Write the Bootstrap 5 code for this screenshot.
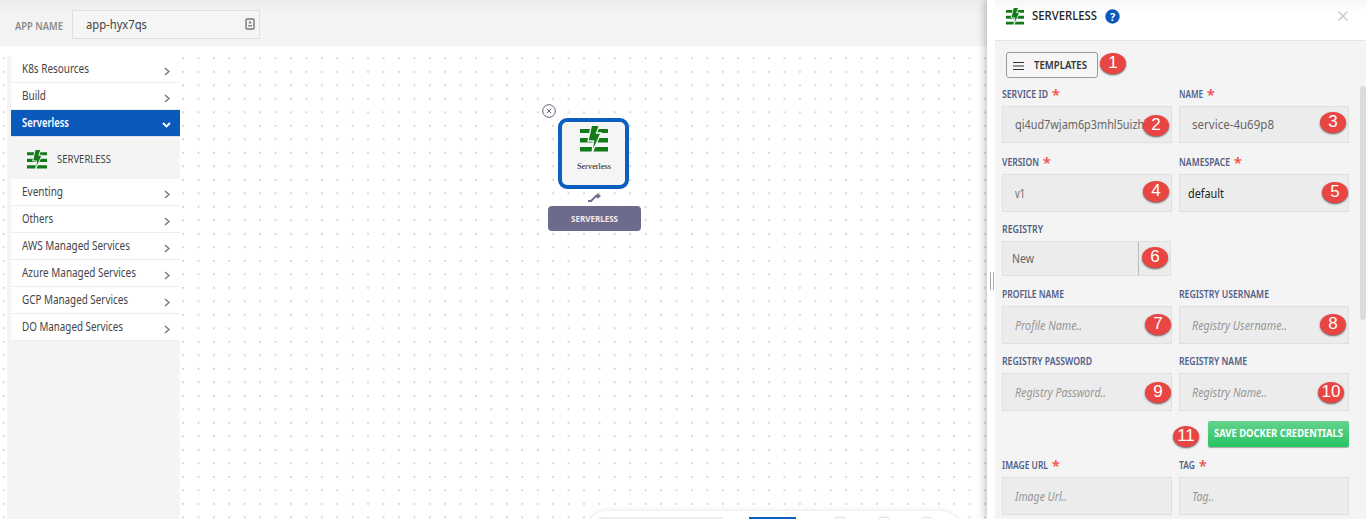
<!DOCTYPE html>
<html lang="en">
<head>
<meta charset="utf-8">
<meta name="viewport" content="width=device-width, initial-scale=1">
<title>Serverless</title>
<link href="https://cdn.jsdelivr.net/npm/bootstrap@5.3.0/dist/css/bootstrap.min.css" rel="stylesheet">
<style>
body{font-family:"Noto Sans","Open Sans",sans-serif;font-size:12px;line-height:1.2;color:#444;height:519px;overflow:hidden;background:#fff}
.fit{display:inline-block;transform-origin:0 50%;white-space:nowrap}
.app-shell{height:519px}
.workspace{width:987px;flex:none}
.topbar{height:46px;background:linear-gradient(#ececec,#f3f3f3 14px,#f4f4f4);padding-left:15px}
.topbar-label{width:57px;font-size:10.5px;font-weight:600;color:#8c8c8c;padding-top:6px}
.app-input{width:188px;height:29px;margin-top:2px;border:1px solid #e0e0e0;background:#f5f5f5;border-radius:0;padding:0 4px 0 13px;color:#444;font-size:12.5px}
.dots{background-image:radial-gradient(circle,#d2d2d2 .6px,rgba(215,215,215,.5) 1px,transparent 1.4px);background-size:15.43px 13.5px;background-position:-4.7px 5.6px}
.side-wrap{width:180px;flex:none;padding:10px 0 0 7px;background-position:-4.2px 5.6px}
.side-panel{background:#f4f4f4;padding-left:4px;height:100%}
.side-panel .list-group-item{height:27px;padding:0 10px 0 11px;border:0;border-bottom:1px solid #eee;border-radius:0;color:#444;background:#fff}
.side-panel .list-group-item.active{background:#0b5abb;color:#fff;font-weight:600;margin:0;border-color:#dde;padding-right:9px}
.side-panel .chev{margin-top:4px}
.sub-item{height:42px;padding:2px 0 0 16px;gap:10px;font-size:11px}
.node{width:71px;height:71px;border:4px solid #0d5fbf;border-radius:9px;background:#f5f5f5;left:378px;top:72px}
.node-text{font:8px "Liberation Serif",serif;color:#111}
.node-close{left:362px;top:58px}
.node-link{left:407px;top:147px}
.node-tag{left:368px;top:160px;width:93px;height:25px;background:#6c6b8c;color:#f3eaf0;border-radius:4px;font-size:9.5px;font-weight:700}
.toolbar-peek{left:407px;bottom:-32px;width:374px;height:40px;border-radius:20px;background:#fff;box-shadow:0 0 4px 1px #e9e9e9}
.drawer{width:379px;background:#fff;box-shadow:-1px 0 9px rgba(0,0,0,.3);z-index:3;padding-left:8px}
.drawer-head{height:41px;border-bottom:1px solid #e4e4e4;padding:0 18px 8px 11px;background:linear-gradient(#f6f6f6,#fff 12px)}
.drawer-title{font-size:12px;font-weight:500;color:#222;margin-left:8px;padding-top:1px}
.drawer-body{background:#f4f4f4;padding:11px 17px 0 7px;height:478px}
.tpl-btn{width:92px;height:26px;margin-left:4px;border:1px solid #999;border-radius:3px;padding:1px 0 0 6px;font-size:10.5px;font-weight:600;color:#333;gap:10px;background:#f6f6f6}
.form-line{display:grid;grid-template-columns:170px 170px;column-gap:7px}
.form-line label{display:block;height:20px;padding-top:2px;font-size:10.5px;font-weight:600;color:#525f87;line-height:13px;white-space:nowrap}
.req{color:#f0504e;font-size:15px;line-height:0;position:relative;top:2px;margin-left:1px}
.field{height:38px;border:1px solid #e0e0e0;border-radius:0;background:#ececec;padding:0 12px;font-size:12.5px;color:#666;white-space:nowrap}
.field.ph>.fit{color:#969696;font-style:italic}
.field-37{height:37px}
.pick{width:169px;height:35px;padding-left:9px}
.pick::after{content:"";position:absolute;left:135px;top:0;bottom:0;border-left:1px solid #bbb}
.pin{position:absolute;width:26px;height:21px;border-radius:50%;background:#e94543;color:#fff;font:normal 17px/20px "Liberation Sans",sans-serif;text-align:center;box-shadow:0 1px 2px rgba(0,0,0,.6)}
.save-btn{width:141px;height:26px;border:0;border-radius:2px;padding:0;font-size:10.5px;font-weight:700;color:#fff;background:linear-gradient(#66d28e,#28c463);box-shadow:0 1px 1px #aaa}
.scroll-thumb{right:0;top:86px;width:6px;height:234px;border-radius:3px;background:#dcdcdc}
.grip{left:3px;top:272px;width:4px;height:18px;border:solid #aaa;border-width:0 1px}
</style>
</head>
<body>
<svg width="0" height="0" class="position-absolute"><defs>
<symbol id="bolt" viewBox="0 0 28 26"><path fill="#127a18" d="M0 3h28v4H0zM0 12h28v4.500H0zM0 21h28v4.500H0z"/><path fill="#127a18" stroke="#f5f5f5" stroke-width="1.300" d="M11.500 -1h8l-3 8h4.500L12 27l1.500-12H8z"/></symbol>
<symbol id="chev" viewBox="0 0 6 9"><path d="M1 1l4 3.5L1 8" fill="none" stroke="#777" stroke-width="1.5"/></symbol>
</defs></svg>
<div class="app-shell d-flex">
  <main class="workspace d-flex flex-column">
    <header class="topbar d-flex align-items-center">
      <div class="topbar-label"><span class="fit" data-w="48">APP NAME</span></div>
      <div class="app-input d-flex align-items-center justify-content-between"><span class="fit" data-w="61">app-hyx7qs</span>
        <svg width="10" height="12" viewBox="0 0 10 12"><rect x="1" y="1" width="8" height="10" rx="1" fill="none" stroke="#777" stroke-width="1.4"/><circle cx="5" cy="4.500" r="1.300" fill="#888"/><path d="M3 8.500v-1.500h4v1.500z" fill="#888"/></svg></div>
    </header>
    <div class="d-flex flex-grow-1">
      <aside class="side-wrap dots"><div class="side-panel">
        <div class="list-group">
          <a class="list-group-item d-flex align-items-center justify-content-between"><span class="fit" data-w="67">K8s Resources</span><svg class="chev" width="6" height="9"><use href="#chev"/></svg></a>
          <a class="list-group-item d-flex align-items-center justify-content-between"><span class="fit" data-w="24">Build</span><svg class="chev" width="6" height="9"><use href="#chev"/></svg></a>
          <a class="list-group-item active d-flex align-items-center justify-content-between"><span class="fit" data-w="47">Serverless</span><svg class="chev" width="9" height="6" viewBox="0 0 9 6"><path d="M1 1l3.500 3.500L8 1" fill="none" stroke="#fff" stroke-width="1.800"/></svg></a>
          <div class="sub-item d-flex align-items-center"><svg width="20" height="19"><use href="#bolt"/></svg><span class="fit" data-w="54">SERVERLESS</span></div>
          <a class="list-group-item d-flex align-items-center justify-content-between"><span class="fit" data-w="41">Eventing</span><svg class="chev" width="6" height="9"><use href="#chev"/></svg></a>
          <a class="list-group-item d-flex align-items-center justify-content-between"><span class="fit" data-w="31">Others</span><svg class="chev" width="6" height="9"><use href="#chev"/></svg></a>
          <a class="list-group-item d-flex align-items-center justify-content-between"><span class="fit" data-w="108">AWS Managed Services</span><svg class="chev" width="6" height="9"><use href="#chev"/></svg></a>
          <a class="list-group-item d-flex align-items-center justify-content-between"><span class="fit" data-w="114">Azure Managed Services</span><svg class="chev" width="6" height="9"><use href="#chev"/></svg></a>
          <a class="list-group-item d-flex align-items-center justify-content-between"><span class="fit" data-w="106">GCP Managed Services</span><svg class="chev" width="6" height="9"><use href="#chev"/></svg></a>
          <a class="list-group-item d-flex align-items-center justify-content-between"><span class="fit" data-w="101">DO Managed Services</span><svg class="chev" width="6" height="9"><use href="#chev"/></svg></a>
        </div>
      </div></aside>
      <section class="dots flex-grow-1 position-relative overflow-hidden">
        <svg class="node-close position-absolute" width="14" height="14" viewBox="0 0 14 14" fill="#fff" stroke="#5f6086"><circle cx="7" cy="7" r="6.300"/><path d="M4.800 4.800l4.400 4.400M9.200 4.800L4.800 9.200"/></svg>
        <div class="node position-absolute d-flex flex-column align-items-center"><svg width="28" height="26" class="mt-1"><use href="#bolt"/></svg><span class="node-text fit" style="margin-top:10px" data-w="34">Serverless</span></div>
        <svg class="node-link position-absolute" width="14" height="10" viewBox="0 0 14 10"><path d="M1 8h3l5-5h3M10 1l2.500 2L10 5" fill="none" stroke="#6c6b8c" stroke-width="1.800"/></svg>
        <div class="node-tag position-absolute d-flex align-items-center justify-content-center"><span class="fit" data-w="47">SERVERLESS</span></div>
        <div class="toolbar-peek position-absolute"><svg width="374" height="40"><path d="M12 7h124" stroke="#f3eeee" stroke-width="2"/><rect x="162" y="6" width="47" height="20" fill="#0d5fbf"/><g fill="none" stroke="#ddd"><circle cx="253" cy="16" r="10"/><circle cx="297" cy="16" r="10"/><circle cx="340" cy="16" r="10"/></g></svg></div>
      </section>
    </div>
  </main>
  <aside class="drawer position-relative">
    <div class="grip position-absolute"></div>
    <div class="drawer-head d-flex align-items-center">
      <svg width="18" height="17"><use href="#bolt"/></svg><span class="drawer-title fit" data-w="65">SERVERLESS</span>
      <svg class="ms-2" width="15" height="15" viewBox="0 0 15 15"><circle cx="7.500" cy="7.500" r="7.200" fill="#0b5abb"/><text x="7.500" y="11.500" text-anchor="middle" fill="#fff" font-size="11" font-weight="700">?</text></svg>
      <svg class="ms-auto" width="10" height="10" viewBox="0 0 10 10"><path d="M0.500 .5l9 9M9.500 .5l-9 9" stroke="#ccc" stroke-width="1.500"/></svg>
    </div>
    <div class="drawer-body">
      <div class="position-relative"><button class="btn tpl-btn d-flex align-items-center"><svg width="11" height="8" viewBox="0 0 11 8"><path d="M0 .5h11M0 4h11M0 7.500h11" stroke="#333"/></svg><span class="fit" data-w="53">TEMPLATES</span></button><span class="pin" style="left:98px;top:1px">1</span></div>
      <div class="form-line" style="margin-top:8px">
        <div><label><span class="fit" data-w="46">SERVICE ID</span> <span class="req">*</span></label><div class="field field-37 d-flex align-items-center position-relative"><span class="fit" data-w="132">qi4ud7wjam6p3mhl5uizhl</span><span class="pin" style="right:2px;top:8px">2</span></div></div>
        <div><label><span class="fit" data-w="24">NAME</span> <span class="req">*</span></label><div class="field field-37 d-flex align-items-center position-relative"><span class="fit" data-w="82">service-4u69p8</span><span class="pin" style="right:2px;top:5px">3</span></div></div>
      </div>
      <div class="form-line" style="margin-top:11px">
        <div><label><span class="fit" data-w="37">VERSION</span> <span class="req">*</span></label><div class="field d-flex align-items-center position-relative"><span class="fit" data-w="10">v1</span><span class="pin" style="right:2px;top:6px">4</span></div></div>
        <div><label><span class="fit" data-w="51">NAMESPACE</span> <span class="req">*</span></label><div class="field d-flex align-items-center position-relative ps-2 text-dark"><span class="fit" data-w="36">default</span><span class="pin" style="right:0;top:7px">5</span></div></div>
      </div>
      <div class="form-line" style="margin-top:9px">
        <div><label><span class="fit" data-w="41">REGISTRY</span></label><div class="field pick d-flex align-items-center position-relative"><span class="fit" data-w="22">New</span><span class="pin" style="right:2px;top:5px">6</span></div></div>
      </div>
      <div class="form-line" style="margin-top:10px">
        <div><label><span class="fit" data-w="62">PROFILE NAME</span></label><div class="field d-flex align-items-center position-relative ph"><span class="fit" data-w="67">Profile Name..</span><span class="pin" style="right:0;top:7px">7</span></div></div>
        <div><label><span class="fit" data-w="90">REGISTRY USERNAME</span></label><div class="field d-flex align-items-center position-relative ph"><span class="fit" data-w="95">Registry Username..</span><span class="pin" style="right:2px;top:7px">8</span></div></div>
      </div>
      <div class="form-line" style="margin-top:9px">
        <div><label><span class="fit" data-w="90">REGISTRY PASSWORD</span></label><div class="field d-flex align-items-center position-relative ph"><span class="fit" data-w="91">Registry Password..</span><span class="pin" style="right:0;top:8px">9</span></div></div>
        <div><label><span class="fit" data-w="68">REGISTRY NAME</span></label><div class="field d-flex align-items-center position-relative ph"><span class="fit" data-w="75">Registry Name..</span><span class="pin" style="right:4px;top:8px">10</span></div></div>
      </div>
      <div class="d-flex justify-content-end position-relative" style="height:46px;padding-top:10px;width:347px"><span class="pin" style="left:171px;top:15px">11</span><button class="btn save-btn d-flex align-items-center justify-content-center"><span class="fit" data-w="129">SAVE DOCKER CREDENTIALS</span></button></div>
      <div class="form-line">
        <div><label><span class="fit" data-w="46">IMAGE URL</span> <span class="req">*</span></label><div class="field d-flex align-items-center ph"><span class="fit" data-w="52">Image Url..</span></div></div>
        <div><label><span class="fit" data-w="16">TAG</span> <span class="req">*</span></label><div class="field d-flex align-items-center ph"><span class="fit" data-w="22">Tag..</span></div></div>
      </div>
    </div>
    <div class="scroll-thumb position-absolute"></div>
  </aside>
</div>
<script src="https://cdn.jsdelivr.net/npm/bootstrap@5.3.0/dist/js/bootstrap.bundle.min.js"></script>
<script>
// Condense each label to the width given in data-w.
document.querySelectorAll('.fit').forEach(function (el) {
  var w = el.getBoundingClientRect().width;
  el.style.flex = 'none';
  w = el.getBoundingClientRect().width;
  el.style.transform = 'scaleX(' + (el.dataset.w / w).toFixed(4) + ')';
  el.style.marginRight = (el.dataset.w - w).toFixed(2) + 'px';
});
</script>
</body>
</html>
